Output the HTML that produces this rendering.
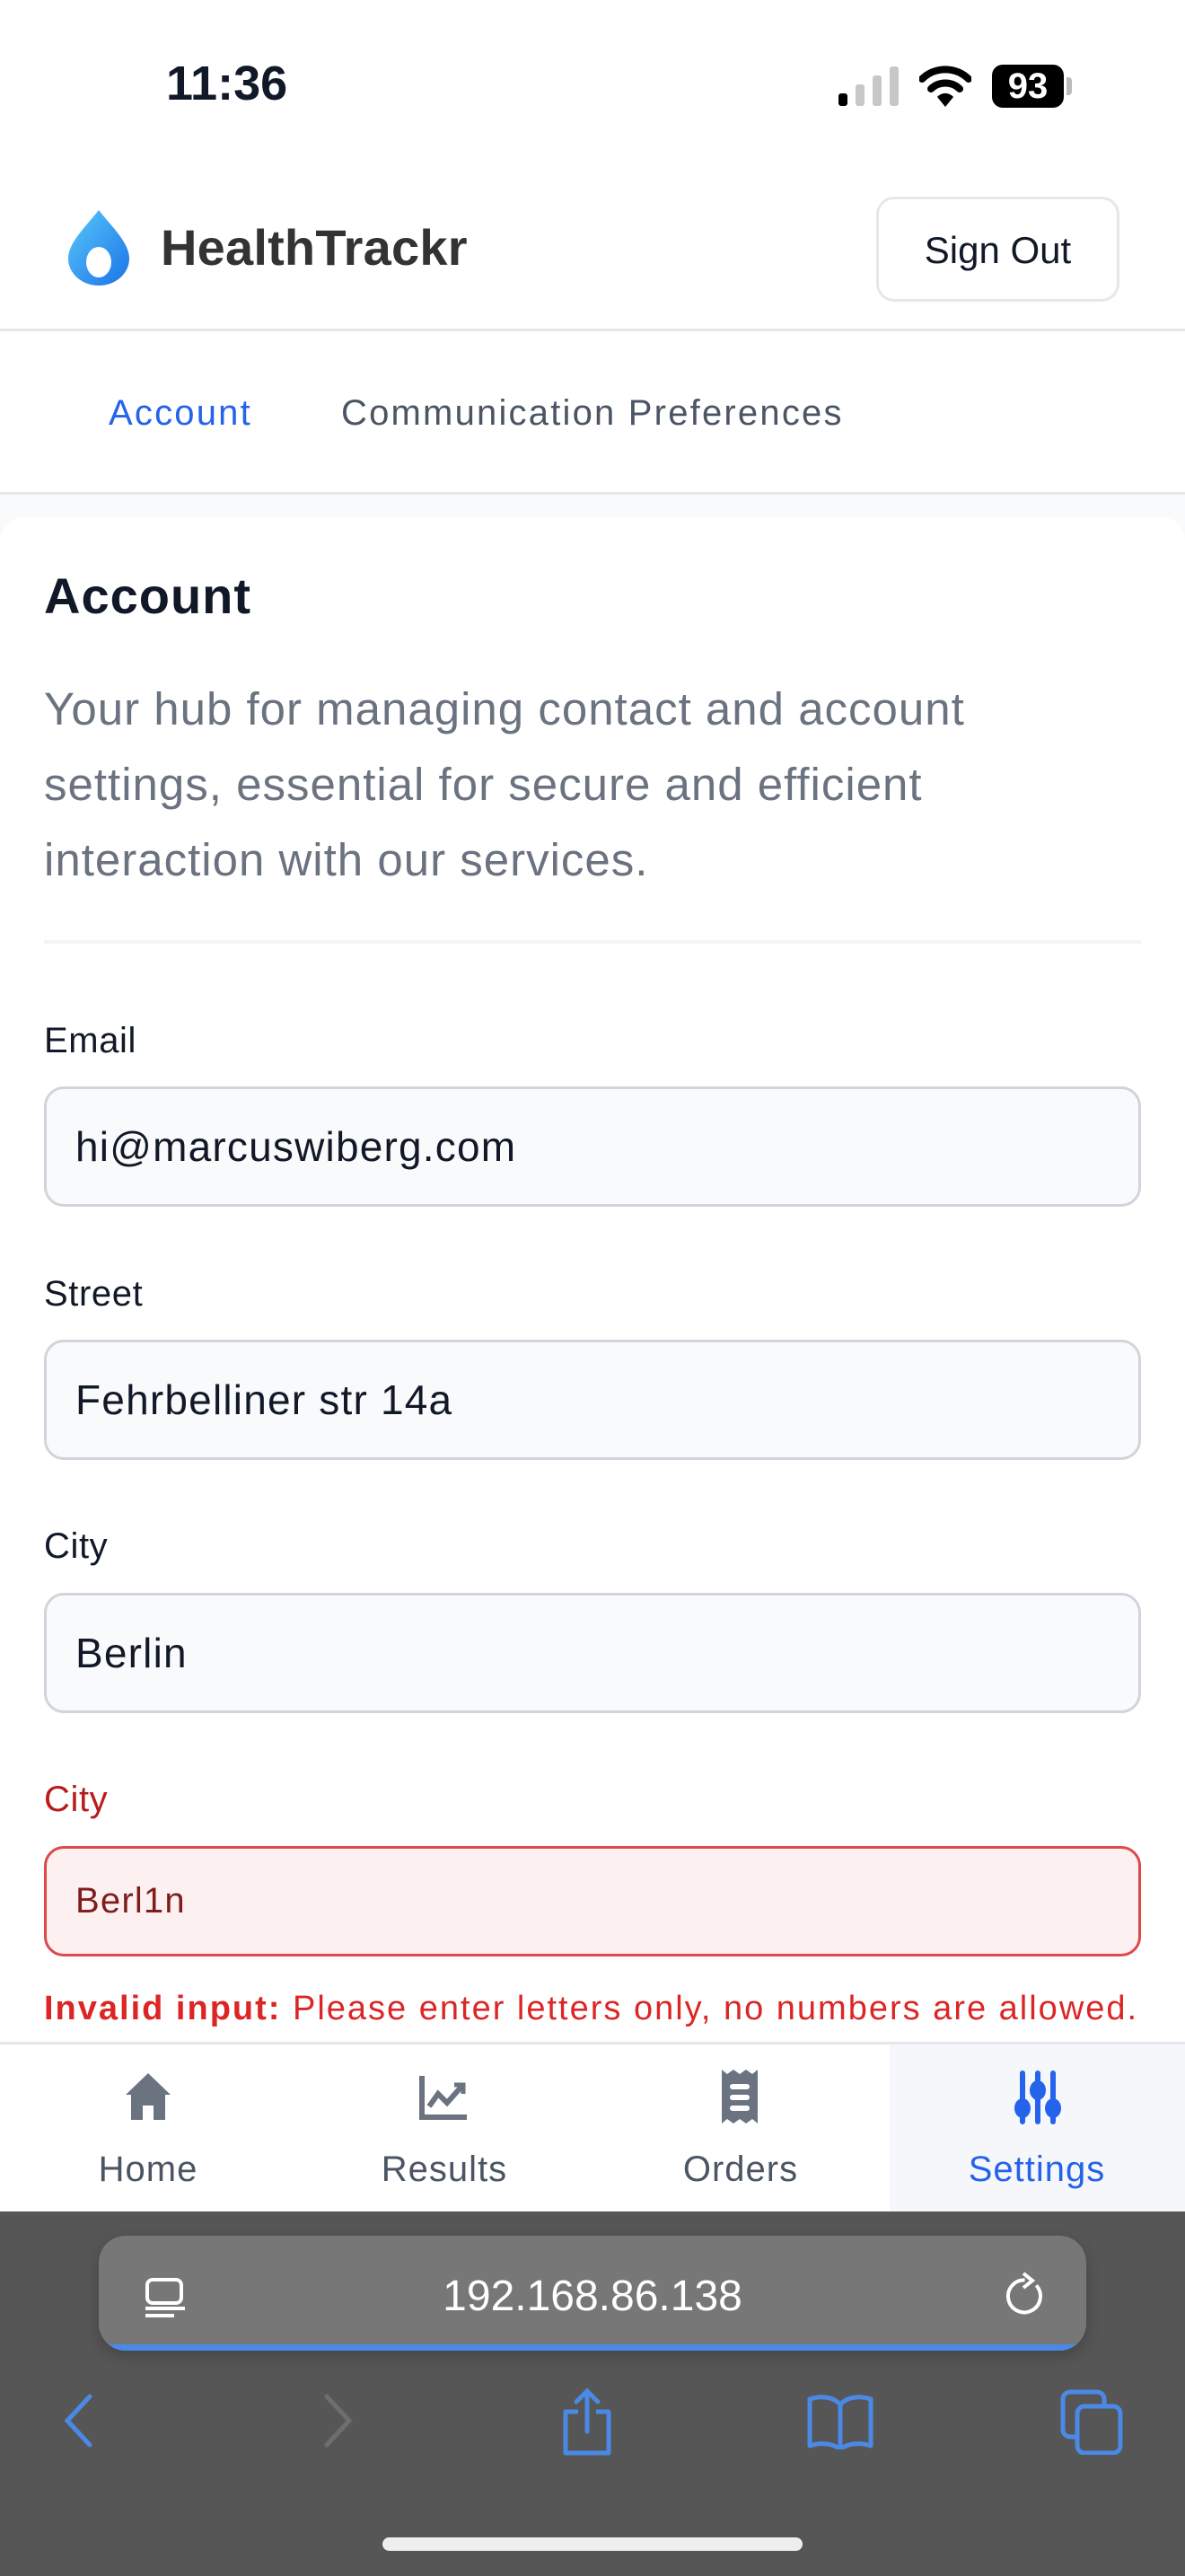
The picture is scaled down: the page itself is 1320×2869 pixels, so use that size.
<!DOCTYPE html>
<html><head><meta charset="utf-8"><style>
*{margin:0;padding:0;box-sizing:border-box}
body{width:1320px;height:2868px;position:relative;background:#fff;font-family:"Liberation Sans",sans-serif;overflow:hidden;color:#111827}
.a{position:absolute;white-space:nowrap}
.lbl{position:absolute;left:49px;font-size:40px;color:#111827;line-height:1;letter-spacing:0.6px}
.inp{position:absolute;left:49px;width:1222px;height:134px;background:#f9fafb;border:3px solid #d1d5db;border-radius:22px;font-size:46px;padding-left:32px;display:flex;align-items:center;color:#111827;letter-spacing:1.2px}
</style></head><body>
<!-- status bar -->
<div class="a" style="left:185px;top:66px;font-size:54px;font-weight:bold;line-height:1">11:36</div>
<svg class="a" style="left:934px;top:74px" width="70" height="44"><rect x="0" y="30" width="10" height="14" rx="3" fill="#000"/><rect x="19" y="20" width="10" height="24" rx="3" fill="#c7c7c7"/><rect x="38" y="10" width="10" height="34" rx="3" fill="#c7c7c7"/><rect x="57" y="0" width="10" height="44" rx="3" fill="#c7c7c7"/></svg>
<svg class="a" style="left:1024px;top:72px" width="58" height="48" viewBox="0 0 58 48"><path d="M3 16 A37 37 0 0 1 55 16" stroke="#000" stroke-width="8" fill="none" stroke-linecap="round"/><path d="M13 27 A23 23 0 0 1 45 27" stroke="#000" stroke-width="8" fill="none" stroke-linecap="round"/><path d="M20 36 L29 47 L38 36 A12 12 0 0 0 20 36Z" fill="#000"/></svg>
<div class="a" style="left:1105px;top:72px;width:80px;height:48px;background:#000;border-radius:12px;color:#fff;font-weight:bold;font-size:40px;text-align:center;line-height:48px">93</div>
<div class="a" style="left:1188px;top:86px;width:6px;height:20px;background:#bbb;border-radius:0 4px 4px 0"></div>
<!-- header -->
<svg class="a" style="left:72px;top:232px" width="76" height="86" viewBox="0 0 76 86"><defs><linearGradient id="g" x1="0" y1="0" x2="1" y2="1"><stop offset="0" stop-color="#5ac8fa"/><stop offset="1" stop-color="#1a73e8"/></linearGradient></defs><path d="M38 2 C52 20 72 38 72 56 A34 30 0 0 1 4 56 C4 38 24 20 38 2Z" fill="url(#g)"/><ellipse cx="38" cy="60" rx="14" ry="17" fill="#fff"/></svg>
<div class="a" style="left:179px;top:248px;font-size:56px;font-weight:bold;color:#333;line-height:1;letter-spacing:0.2px">HealthTrackr</div>
<div class="a" style="left:976px;top:219px;width:271px;height:117px;border:3px solid #e5e7eb;border-radius:20px;font-size:42px;text-align:center;line-height:113px;color:#111827">Sign Out</div>
<div class="a" style="left:0;top:366px;width:1320px;height:3px;background:#e5e7eb"></div>
<!-- tabs -->
<div class="a" style="left:121px;top:440px;font-size:40px;color:#2563eb;line-height:1;letter-spacing:2.2px">Account</div>
<div class="a" style="left:380px;top:440px;font-size:40px;color:#4b5563;line-height:1;letter-spacing:2.2px">Communication Preferences</div>
<div class="a" style="left:0;top:548px;width:1320px;height:3px;background:#e5e7eb"></div>
<div class="a" style="left:0;top:551px;width:1320px;height:1730px;background:#f9fafb"></div>
<div class="a" style="left:0;top:576px;width:1320px;height:1700px;background:#fff;border-radius:26px 26px 0 0"></div>
<!-- card -->
<div class="a" style="left:49px;top:636px;font-size:56px;font-weight:bold;line-height:1;color:#111827;letter-spacing:1px">Account</div>
<div class="a" style="left:49px;top:748px;font-size:51px;color:#6b7280;line-height:84px;white-space:normal;width:1130px;letter-spacing:1px">Your hub for managing contact and account settings, essential for secure and efficient interaction with our services.</div>
<div class="a" style="left:49px;top:1047px;width:1222px;height:4px;background:#f3f4f6"></div>
<div class="lbl" style="top:1139px">Email</div>
<div class="inp" style="top:1210px">hi@marcuswiberg.com</div>
<div class="lbl" style="top:1421px">Street</div>
<div class="inp" style="top:1492px">Fehrbelliner str 14a</div>
<div class="lbl" style="top:1702px">City</div>
<div class="inp" style="top:1774px">Berlin</div>
<div class="lbl" style="top:1984px;color:#b91c1c">City</div>
<div class="inp" style="top:2056px;height:123px;background:#fdf0f0;border-color:#dc4a4a;color:#7f1d1d;font-size:40px">Berl1n</div>
<div class="a" style="left:49px;top:2218px;font-size:38px;color:#dc2626;line-height:1;letter-spacing:2px"><b>Invalid input:</b> Please enter letters only, no numbers are allowed.</div>
<!-- bottom nav -->
<div class="a" style="left:0;top:2274px;width:1320px;height:189px;background:#fff;border-top:3px solid #e5e7eb"></div>
<div class="a" style="left:991px;top:2277px;width:329px;height:186px;background:#f5f7fa"></div>
<svg class="a" style="left:138px;top:2307px" width="54" height="56" viewBox="0 0 54 56"><path d="M27 2 L52 26 L46 26 L46 54 L33 54 L33 38 L21 38 L21 54 L8 54 L8 26 L2 26Z" fill="#6b7280"/></svg>
<svg class="a" style="left:466px;top:2310px" width="56" height="52" viewBox="0 0 56 52"><path d="M4 2 V48 H54" stroke="#6b7280" stroke-width="6" fill="none"/><path d="M12 36 L22 22 L32 32 L48 14" stroke="#6b7280" stroke-width="6" fill="none"/><path d="M40 12 H50 V22" stroke="#6b7280" stroke-width="5" fill="none"/></svg>
<svg class="a" style="left:802px;top:2305px" width="44" height="60" viewBox="0 0 44 60"><path d="M2 0 L8 5 L15 0 L22 5 L29 0 L36 5 L42 0 V60 L36 55 L29 60 L22 55 L15 60 L8 55 L2 60Z" fill="#6b7280"/><rect x="11" y="16" width="22" height="6" rx="3" fill="#fff"/><rect x="11" y="28" width="22" height="6" rx="3" fill="#fff"/><rect x="11" y="40" width="22" height="6" rx="3" fill="#fff"/></svg>
<svg class="a" style="left:1128px;top:2306px" width="56" height="60" viewBox="0 0 56 60"><g fill="#2563eb"><rect x="8" y="0" width="6" height="60" rx="3"/><rect x="25" y="0" width="6" height="60" rx="3"/><rect x="42" y="0" width="6" height="60" rx="3"/><ellipse cx="11" cy="42" rx="9" ry="11"/><ellipse cx="28" cy="22" rx="9" ry="11"/><ellipse cx="45" cy="42" rx="9" ry="11"/></g></svg>
<div class="a" style="left:0;top:2396px;width:330px;text-align:center;font-size:40px;color:#4b5563;line-height:1;letter-spacing:1px">Home</div>
<div class="a" style="left:330px;top:2396px;width:330px;text-align:center;font-size:40px;color:#4b5563;line-height:1;letter-spacing:1px">Results</div>
<div class="a" style="left:660px;top:2396px;width:330px;text-align:center;font-size:40px;color:#4b5563;line-height:1;letter-spacing:1px">Orders</div>
<div class="a" style="left:990px;top:2396px;width:330px;text-align:center;font-size:40px;color:#2563eb;line-height:1;letter-spacing:1px">Settings</div>
<!-- safari -->
<div class="a" style="left:0;top:2463px;width:1320px;height:406px;background:#565656"></div>
<div class="a" style="left:110px;top:2490px;width:1100px;height:128px;background:#777;border-radius:30px;overflow:hidden;box-shadow:0 6px 16px rgba(0,0,0,.2)"><div style="position:absolute;left:0;bottom:0;width:100%;height:7px;background:#4a8ae6"></div></div>
<svg class="a" style="left:160px;top:2537px" width="48" height="46" viewBox="0 0 48 46"><rect x="4" y="2" width="38" height="26" rx="6" stroke="#fff" stroke-width="4" fill="none"/><rect x="2" y="32" width="44" height="4" fill="#fff"/><rect x="2" y="40" width="32" height="4" fill="#fff"/></svg>
<div class="a" style="left:110px;top:2534px;width:1100px;text-align:center;font-size:48px;color:#fff;line-height:1">192.168.86.138</div>
<svg class="a" style="left:1118px;top:2528px" width="50" height="56" viewBox="0 0 50 56"><path d="M30 12 A18 18 0 1 0 40 22" stroke="#fff" stroke-width="4" fill="none" transform="rotate(-20 25 30)"/><path d="M22 4 L32 12 L22 20" stroke="#fff" stroke-width="4" fill="none"/></svg>
<svg class="a" style="left:70px;top:2666px" width="34" height="60"><path d="M30 3 L5 30 L30 57" stroke="#4a8ae6" stroke-width="5" fill="none" stroke-linecap="round"/></svg>
<svg class="a" style="left:360px;top:2666px" width="34" height="60"><path d="M4 3 L29 30 L4 57" stroke="#6e6e6e" stroke-width="5" fill="none" stroke-linecap="round"/></svg>
<svg class="a" style="left:624px;top:2660px" width="60" height="76" viewBox="0 0 60 76"><path d="M20 26 H6 V72 H54 V26 H40" stroke="#4a8ae6" stroke-width="5" fill="none" stroke-linejoin="round"/><path d="M30 4 V48 M18 15 L30 3 L42 15" stroke="#4a8ae6" stroke-width="5" fill="none" stroke-linecap="round"/></svg>
<svg class="a" style="left:898px;top:2666px" width="76" height="62" viewBox="0 0 76 62"><path d="M38 12 C30 3 16 2 4 6 V58 C16 54 30 55 38 62 C46 55 60 54 72 58 V6 C60 2 46 3 38 12 Z M38 12 V60" stroke="#4a8ae6" stroke-width="5" fill="none" stroke-linejoin="round"/></svg>
<svg class="a" style="left:1180px;top:2660px" width="72" height="74" viewBox="0 0 72 74"><rect x="4" y="4" width="46" height="50" rx="8" stroke="#4a8ae6" stroke-width="5" fill="none"/><rect x="20" y="20" width="48" height="52" rx="8" stroke="#4a8ae6" stroke-width="5" fill="#565656"/></svg>
<div class="a" style="left:426px;top:2826px;width:468px;height:15px;border-radius:8px;background:#eee"></div>
</body></html>
